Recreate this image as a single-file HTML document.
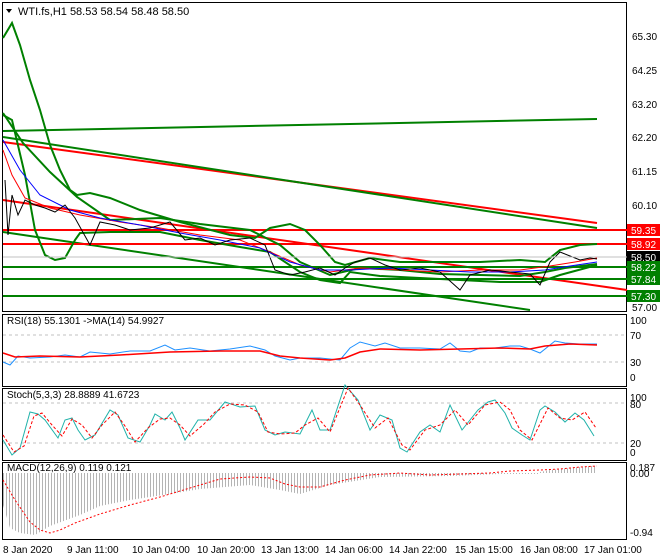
<!DOCTYPE html>
<html><head><meta charset="utf-8"><style>
html,body{margin:0;padding:0;background:#fff;}
svg{display:block;font-family:"Liberation Sans",sans-serif;}
text{font-size:10px;fill:#000;}
</style></head><body>
<svg width="660" height="560" viewBox="0 0 660 560">
<defs>
<pattern id="hb" width="3" height="10" patternUnits="userSpaceOnUse"><rect x="0" y="0" width="1" height="10" fill="#b4b4b4"/></pattern>
</defs>
<rect width="660" height="560" fill="#fff"/>
<g fill="none" stroke="#000" stroke-width="1">
<rect x="2.5" y="2.5" width="624" height="309"/>
<rect x="2.5" y="314.5" width="624" height="72"/>
<rect x="2.5" y="388.5" width="624" height="72"/>
<rect x="2.5" y="462.5" width="624" height="77"/>
</g>
<g fill="none" stroke-width="2">
<polyline stroke="#008000" points="3,131 597,119"/>
<polyline stroke="#ff0000" points="3,142 597,223"/>
<polyline stroke="#008000" points="3,137 597,228"/>
<polyline stroke="#ff0000" points="3,200 627,290"/>
<polyline stroke="#008000" points="3,232 530,310"/>
<line stroke="#ff0000" x1="3" y1="230" x2="627" y2="230"/>
<line stroke="#ff0000" x1="3" y1="244" x2="627" y2="244"/>
<line stroke="#008000" x1="3" y1="267" x2="627" y2="267"/>
<line stroke="#008000" x1="3" y1="279" x2="627" y2="279"/>
<line stroke="#008000" x1="3" y1="296" x2="627" y2="296"/>
<polyline stroke="#008000" points="3,38 12,23 20,45 30,80 40,110 50,145 60,170 70,190 77,195 90,193 110,198 140,210 180,222 230,235 255,238 270,228 290,224 305,230 320,245 335,262 345,265 370,258 400,262 440,262 480,262 520,260 545,262 560,250 580,245 597,244"/>
<polyline stroke="#008000" points="3,113 23,143 50,172 77,197 110,220 160,218 200,224 250,230 280,245 300,262 330,275 360,268 400,270 440,274 480,275 520,276 545,272 565,268 597,264"/>
<polyline stroke="#008000" points="3,115 12,120 25,175 35,230 45,255 55,260 65,258 75,240 80,233 110,232 160,232 200,240 240,247 270,252 300,272 320,280 340,283 350,272 380,276 420,278 460,280 500,282 540,282 560,275 597,265"/>
<polyline stroke="#ff0000" stroke-width="1" points="3,150 12,175 25,198 50,208 80,215 120,222 160,228 200,235 240,240 270,252 300,265 330,272 360,268 400,270 440,272 480,270 520,270 550,266 575,262 597,258"/>
<polyline stroke="#0000ff" stroke-width="1" points="3,140 20,170 40,195 70,210 100,218 140,225 180,233 220,240 260,248 290,262 320,270 350,270 390,268 430,270 470,272 510,272 545,270 570,266 597,262"/>
<polyline stroke="#000" stroke-width="1" points="5,180 8,235 12,195 18,215 25,200 35,205 45,208 55,212 65,205 75,218 90,245 100,222 115,225 130,230 150,228 170,222 185,240 200,238 215,245 230,240 250,238 265,245 275,270 290,275 305,272 320,268 335,275 345,268 355,262 370,258 385,265 400,270 420,268 440,272 460,290 470,275 490,270 510,272 530,274 540,285 550,262 560,252 570,256 580,260 590,258 597,259"/>
</g>
<line x1="3" y1="257" x2="627" y2="257" stroke="#c0c0c0" stroke-width="1"/>
<polygon points="6,9 12,9 9,13" fill="#000"/>
<text x="18" y="15" style="font-size:11px">WTI.fs,H1  58.53 58.54 58.48 58.50</text>
<g>
<text x="632" y="40">65.30</text><text x="632" y="74">64.25</text><text x="632" y="108">63.20</text>
<text x="632" y="141">62.20</text><text x="632" y="175">61.15</text><text x="632" y="209">60.10</text>
<rect x="627" y="224" width="33" height="12" fill="#ff0000"/><text x="631" y="234" style="fill:#fff">59.35</text>
<rect x="627" y="238" width="33" height="12" fill="#ff0000"/><text x="631" y="248" style="fill:#fff">58.92</text>
<rect x="627" y="251" width="33" height="12" fill="#000"/><text x="631" y="261" style="fill:#fff">58.50</text>
<rect x="627" y="261" width="33" height="12" fill="#008000"/><text x="631" y="271" style="fill:#fff">58.22</text>
<rect x="627" y="273" width="33" height="12" fill="#008000"/><text x="631" y="283" style="fill:#fff">57.84</text>
<rect x="627" y="290" width="33" height="12" fill="#008000"/><text x="631" y="300" style="fill:#fff">57.30</text>
<text x="632" y="311">57.00</text>
<text x="630" y="324">100</text><text x="630" y="339">70</text><text x="630" y="366">30</text><text x="630" y="381">0</text>
<text x="630" y="401">100</text><text x="630" y="408">80</text><text x="630" y="447">20</text><text x="630" y="456">0</text>
<text x="630" y="471">0.187</text><text x="630" y="477">0.00</text><text x="630" y="536">-0.94</text>
</g>
<g fill="none" stroke-width="1">
<line x1="3" y1="335" x2="627" y2="335" stroke="#c0c0c0" stroke-dasharray="3,3"/>
<line x1="3" y1="362" x2="627" y2="362" stroke="#c0c0c0" stroke-dasharray="3,3"/>
<polyline stroke="#1e90ff" points="3,362 10,365 18,356 30,358 50,357 65,355 80,357 90,352 110,354 130,351 150,351 165,345 175,350 190,348 210,351 230,349 250,346 265,350 275,356 290,360 300,358 320,358 340,360 350,348 360,342 375,346 385,343 400,348 420,348 440,349 450,343 460,351 470,352 480,348 495,348 510,346 520,346 530,349 540,353 555,341 565,343 580,344 597,344"/>
<polyline stroke="#ff0000" stroke-width="1.5" points="3,353 15,357 40,356 80,357 120,355 170,352 220,351 260,351 280,356 300,358 330,360 345,358 360,352 380,349 420,350 460,349 500,348 530,349 545,346 570,344 597,345"/>
</g>
<text x="7" y="324">RSI(18) 55.1301  -&gt;MA(14) 54.9927</text>
<g fill="none" stroke-width="1">
<line x1="3" y1="403" x2="627" y2="403" stroke="#c0c0c0" stroke-dasharray="3,3"/>
<line x1="3" y1="443" x2="627" y2="443" stroke="#c0c0c0" stroke-dasharray="3,3"/>
<polyline stroke="#20b2aa" points="3,440 12,455 20,448 30,412 38,414 45,420 58,438 65,420 72,418 78,430 85,440 95,435 110,410 118,415 128,438 140,442 150,425 155,414 165,420 172,412 180,428 185,440 198,420 210,420 225,402 240,407 255,406 265,430 275,435 285,432 300,434 312,410 320,430 330,430 345,385 358,400 370,430 380,415 392,420 400,448 407,452 420,432 430,425 440,432 450,405 462,430 470,420 478,410 488,402 495,400 505,413 512,428 522,435 530,440 540,410 545,406 555,412 565,422 575,413 584,420 594,436"/>
<polyline stroke="#ff0000" stroke-dasharray="3,2" points="3,435 14,452 24,446 34,416 42,413 52,425 62,436 72,419 82,425 92,438 102,425 115,412 125,426 135,442 148,428 160,419 170,418 180,425 190,436 204,424 215,412 230,404 245,405 258,412 268,432 280,434 295,433 305,425 318,418 330,432 348,388 360,405 375,428 388,418 402,445 410,450 425,430 440,425 455,410 468,425 485,405 500,402 510,410 520,430 532,440 548,408 560,418 572,420 585,412 596,428"/>
</g>
<text x="7" y="398">Stoch(5,3,3) 28.8889 41.6723</text>
<polygon fill="url(#hb)" points="3,473 3,505 10,528 20,533 35,535 50,526 80,515 100,506 130,500 170,494 200,489 250,485 280,490 300,494 330,485 380,477 450,476 500,474 540,474 540,472 550,470 590,466 597,466 597,473"/>
<polyline fill="none" stroke="#ff0000" stroke-dasharray="2,2" points="3,480 15,500 30,522 40,530 50,533 60,530 75,523 100,514 130,505 160,497 190,488 220,479 250,477 270,478 285,484 300,487 320,487 345,480 370,475 400,473 430,475 460,474 490,473 510,471 540,470 560,469 580,467 597,466"/>
<text x="7" y="471">MACD(12,26,9) 0.119 0.121</text>
<g>
<text x="3" y="553">8 Jan 2020</text><text x="67" y="553">9 Jan 11:00</text><text x="132" y="553">10 Jan 04:00</text>
<text x="197" y="553">10 Jan 20:00</text><text x="261" y="553">13 Jan 13:00</text><text x="325" y="553">14 Jan 06:00</text>
<text x="389" y="553">14 Jan 22:00</text><text x="455" y="553">15 Jan 15:00</text><text x="520" y="553">16 Jan 08:00</text>
<text x="584" y="553">17 Jan 01:00</text>
</g>
</svg>
</body></html>
